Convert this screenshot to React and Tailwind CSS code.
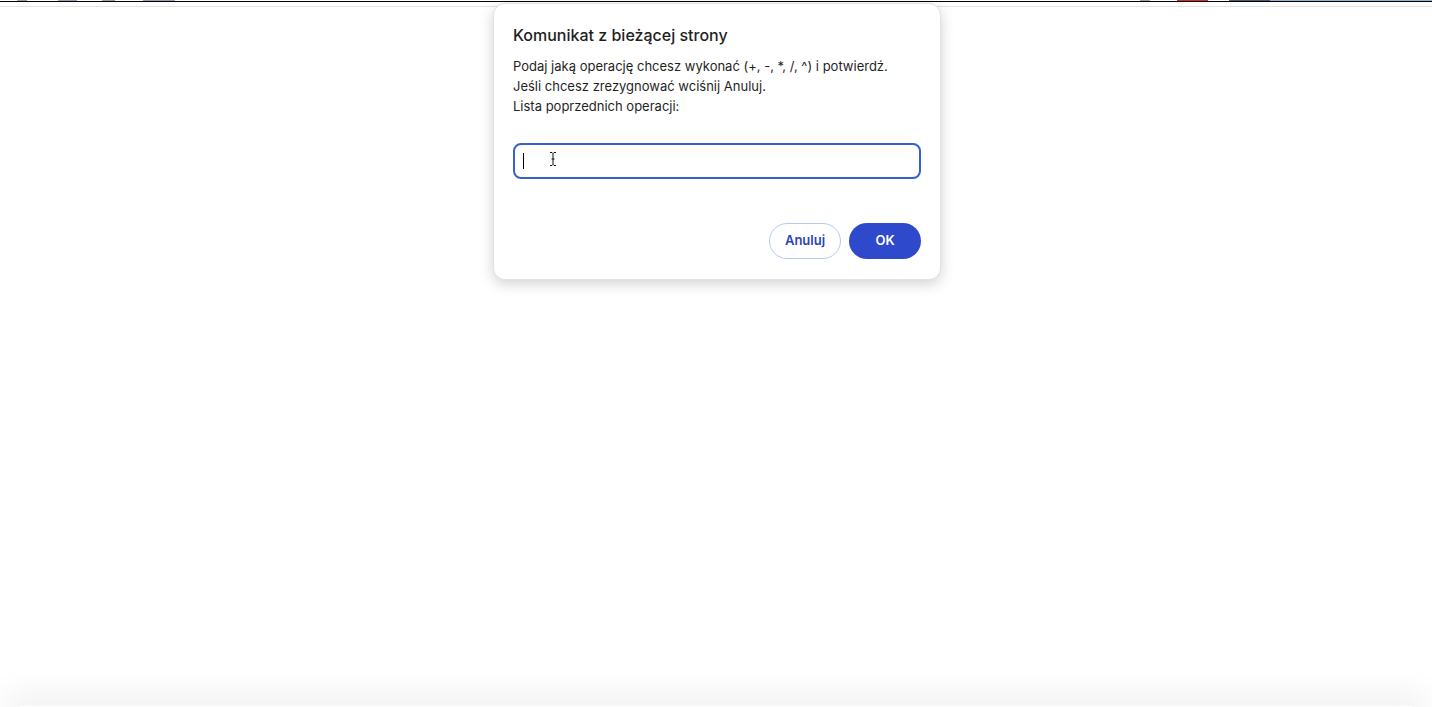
const stripBits = [
  { w: "w-[17px]", c: "bg-white" },
  { w: "w-[10px]", c: "bg-gray-400" },
  { w: "w-[31px]", c: "bg-white" },
  { w: "w-[19px]", c: "bg-gray-400" },
  { w: "w-[25px]", c: "bg-white" },
  { w: "w-[13px]", c: "bg-gray-400" },
  { w: "w-[28px]", c: "bg-white" },
  { w: "w-[32px]", c: "bg-gray-400" },
  { w: "w-[965px]", c: "bg-white" },
  { w: "w-[10px]", c: "bg-gray-400" },
  { w: "w-[27px]", c: "bg-white" },
  { w: "w-[31px]", c: "bg-[#e0281c]" },
  { w: "w-[21px]", c: "bg-white" },
  { w: "w-[41px]", c: "bg-[#4e5d6e]" },
  { w: "flex-1", c: "bg-[#8eb3da]" },
];

export default function App() {
  return (
    <div
      className="relative flex h-[707px] w-full flex-col overflow-hidden bg-white"
      style={{ fontFamily: "Inter, 'Noto Sans', sans-serif" }}
    >
      {/* cut-off page at the top */}
      <div className="flex h-[1px] w-full">
        {stripBits.map((b, i) => (
          <span key={i} className={`h-[1px] ${b.w} ${b.c}`} />
        ))}
      </div>
      <div className="h-[1px] w-full bg-black" />
      <div className="mt-[4px] h-[1px] w-full bg-[#e3e3e3]" />
      <div className="flex-1" />
      {/* shadow from the panel just below the view */}
      <div className="mx-[20px] h-[1px] shadow-[0_0_30px_14px_rgba(0,0,0,0.06)]" />

      {/* dialog over the page */}
      <div className="absolute left-[493px] top-[3px] w-[448px] rounded-[12px] border border-[#e2e2e2] bg-white px-[19px] pb-[20px] pt-[20px] shadow-[0_4px_14px_rgba(0,0,0,0.18)]">
        <h1 className="text-[16px] font-medium leading-[22px] text-[#1f1f1f]">
          Komunikat z bieżącej strony
        </h1>
        <div className="mt-[10px] text-[13px] leading-[20px] text-[#1f1f1f]">
          <p>Podaj jaką operację chcesz wykonać (+, -, *, /, ^) i potwierdź.</p>
          <p>Jeśli chcesz zrezygnować wciśnij Anuluj.</p>
          <p>Lista poprzednich operacji:</p>
        </div>
        <div className="mt-[27px] flex h-[36px] items-center rounded-[8px] border-2 border-[#3561d0] px-[8px]">
          <span className="h-[16px] w-[1px] bg-black" />
          <svg className="ml-[25px] -mt-[4px]" width="8" height="16" viewBox="0 0 8 16">
            <path
              d="M1 1.5h2l1 1 1-1h2M4 2.5v11M1 14.5h2l1-1 1 1h2M2.5 8h3"
              fill="none"
              stroke="#111"
              strokeWidth="1"
            />
          </svg>
        </div>
        <div className="mt-[44px] flex justify-end gap-[8px]">
          <button className="h-[36px] w-[72px] rounded-full border border-[#b7c8ef] bg-white text-[13px] font-semibold text-[#2c45b8]">
            Anuluj
          </button>
          <button className="h-[36px] w-[72px] rounded-full bg-[#2f49cd] text-[13px] font-semibold text-white">
            OK
          </button>
        </div>
      </div>
    </div>
  );
}
